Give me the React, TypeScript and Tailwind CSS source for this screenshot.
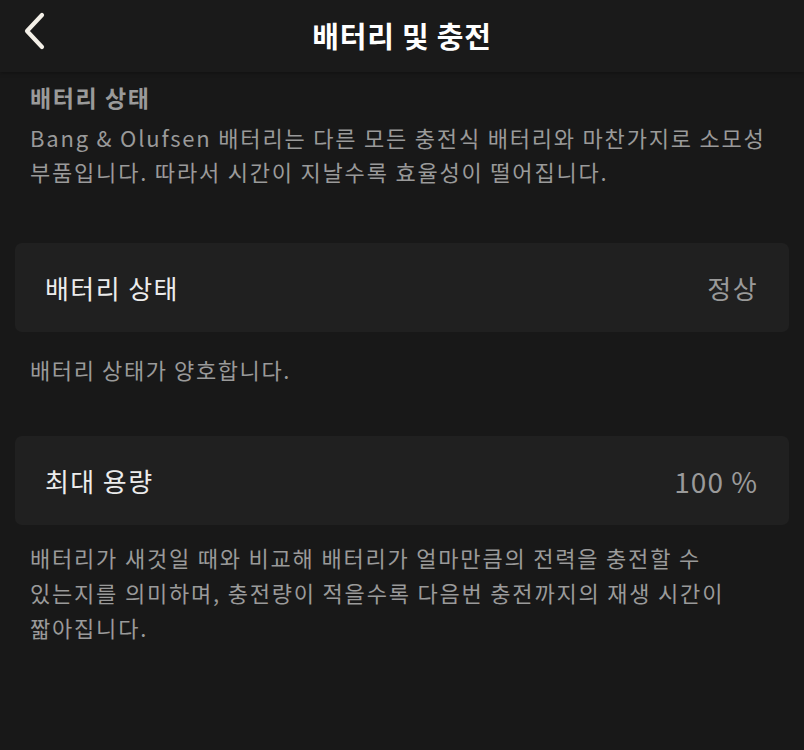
import React from 'react'

const font = { fontFamily: '"Noto Sans CJK KR", "Noto Sans", sans-serif' }

interface InfoRowProps {
  label: string
  value: string
  valueClass?: string
}

const InfoRow: React.FC<InfoRowProps> = ({ label, value, valueClass = 'text-[26px]' }) => (
  <div className="mx-[15px] flex h-[89px] items-center justify-between rounded-[7px] bg-[#202020] pl-[30px] pr-[31px]">
    <span className="text-[26px] tracking-[1.4px] text-[#ececec]">{label}</span>
    <span className={`${valueClass} text-[#9a9a9a]`}>{value}</span>
  </div>
)

const BackIcon = () => (
  <svg width="28" height="40" viewBox="0 0 28 40" fill="none">
    <path
      d="M22 4 L7 20 L22 36"
      stroke="#f4f0e8"
      strokeWidth="4.2"
      strokeLinecap="round"
      strokeLinejoin="round"
    />
  </svg>
)

export default function App() {
  return (
    <div className="min-h-[750px] w-full bg-[#181818]" style={font}>
      <header className="relative flex h-[72px] items-center justify-center bg-[#1a1a1a] shadow-[0_1px_4px_rgba(0,0,0,0.35)]">
        <button className="absolute left-[20px] top-[11px]">
          <BackIcon />
        </button>
        <h1 className="text-[29px] font-bold tracking-[0.8px] text-white">배터리 및 충전</h1>
      </header>

      <section className="px-[30px] pt-[10px]">
        <h2 className="text-[23px] font-bold leading-[30px] tracking-[1.6px] text-[#9a9a9a]">배터리 상태</h2>
        <p className="mt-[8px] text-[22px] leading-[34px] tracking-[1.8px] text-[#9a9a9a]">
          Bang &amp; Olufsen 배터리는 다른 모든 충전식 배터리와 마찬가지로 소모성
          <br />
          부품입니다. 따라서 시간이 지날수록 효율성이 떨어집니다.
        </p>
      </section>

      <div className="mt-[55px]">
        <InfoRow label="배터리 상태" value="정상" valueClass="text-[26px] tracking-[1.4px]" />
      </div>
      <p className="px-[30px] pt-[20px] text-[22px] leading-[34px] tracking-[1.6px] text-[#9a9a9a]">
        배터리 상태가 양호합니다.
      </p>

      <div className="mt-[50px]">
        <InfoRow label="최대 용량" value="100 %" valueClass="text-[28px] tracking-[1px]" />
      </div>
      <p className="px-[30px] pt-[15px] text-[22px] leading-[35px] tracking-[1.8px] text-[#9a9a9a]">
        배터리가 새것일 때와 비교해 배터리가 얼마만큼의 전력을 충전할 수
        <br />
        있는지를 의미하며, 충전량이 적을수록 다음번 충전까지의 재생 시간이
        <br />
        짧아집니다.
      </p>
    </div>
  )
}
